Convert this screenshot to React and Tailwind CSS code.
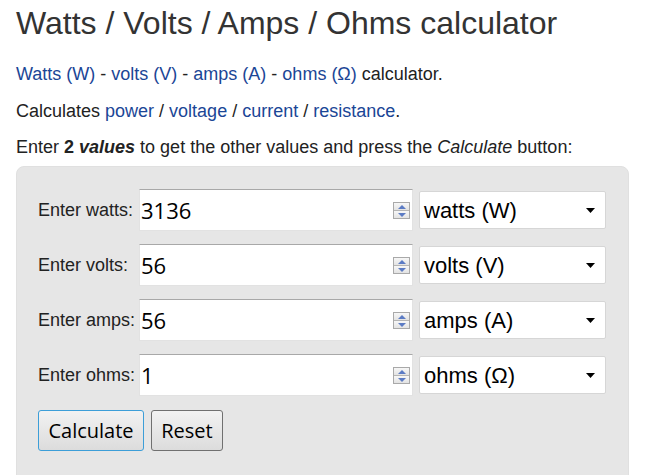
import React, { useState } from 'react';

const rows = [
  { label: 'Enter watts:', value: '3136', unit: 'watts (W)' },
  { label: 'Enter volts:', value: '56', unit: 'volts (V)' },
  { label: 'Enter amps:', value: '56', unit: 'amps (A)' },
  { label: 'Enter ohms:', value: '1', unit: 'ohms (Ω)' },
];

// little up/down spinner like the old windows number input
function Spinner() {
  return (
    <div className="absolute right-[2px] top-[12px] flex h-[17px] w-[17px] flex-col border border-[#a9a9a9] bg-[#eeeeee]">
      <div className="flex flex-1 items-center justify-center border-b border-[#b5b5b5] bg-gradient-to-b from-[#f7f7f7] to-[#e3e3e3]">
        <svg width="8" height="4" viewBox="0 0 8 4"><path d="M0 4 L4 0 L8 4 Z" fill="#5b7bc4" /></svg>
      </div>
      <div className="flex flex-1 items-center justify-center bg-gradient-to-b from-[#f7f7f7] to-[#e3e3e3]">
        <svg width="8" height="4" viewBox="0 0 8 4"><path d="M0 0 L8 0 L4 4 Z" fill="#5b7bc4" /></svg>
      </div>
    </div>
  );
}

function Row({ label, value, unit }) {
  const [val, setVal] = useState(value);
  return (
    <div className="flex items-center">
      <label className="w-[101px] shrink-0 text-[18px] text-[#222]">{label}</label>
      <div className="relative h-[42px] w-[274px] shrink-0 border border-[#e2e2e2] border-t-[#a8a8a8] bg-white">
        <input
          value={val}
          onChange={(e) => setVal(e.target.value)}
          className="h-full w-full bg-transparent pl-[1px] pr-6 text-[22px] text-black outline-none [font-family:'Open_Sans',sans-serif]"
        />
        <Spinner />
      </div>
      <div className="relative ml-[6px] flex h-[38px] w-[187px] shrink-0 items-center rounded-[2px] border border-[#d6d6d6] bg-white pl-[4px]">
        <span className="text-[22px] text-black">{unit}</span>
        <svg className="absolute right-[10px] top-[16px]" width="9" height="5" viewBox="0 0 9 5"><path d="M0 0 L9 0 L4.5 5 Z" fill="#000" /></svg>
      </div>
    </div>
  );
}

export default function App() {
  return (
    <div className="min-h-[475px] bg-white px-[16px] [font-family:'Liberation_Sans',Arial,sans-serif]">
      <h1 className="pt-[4px] text-[32px] leading-[38px] font-normal text-[#333]">
        Watts / Volts / Amps / Ohms calculator
      </h1>
      <p className="mt-[19px] text-[18px] leading-[26px] text-[#222]">
        <a className="text-[#1b4696]">Watts (W)</a> - <a className="text-[#1b4696]">volts (V)</a> -{' '}
        <a className="text-[#1b4696]">amps (A)</a> - <a className="text-[#1b4696]">ohms (Ω)</a> calculator.
      </p>
      <p className="mt-[11px] text-[18px] leading-[26px] text-[#222]">
        Calculates <a className="text-[#1b4696]">power</a> / <a className="text-[#1b4696]">voltage</a> /{' '}
        <a className="text-[#1b4696]">current</a> / <a className="text-[#1b4696]">resistance</a>.
      </p>
      <p className="mt-[10px] text-[18px] leading-[26px] text-[#222]">
        Enter <b>2 <i>values</i></b> to get the other values and press the <i>Calculate</i> button:
      </p>

      <div className="mt-[6px] w-[613px] rounded-t-[8px] border border-[#e0e0e0] bg-[#e6e6e6] pb-[40px] pl-[21px] pt-[22px]">
        <div className="flex flex-col gap-[13px]">
          {rows.map((r) => (
            <Row key={r.label} {...r} />
          ))}
        </div>
        <div className="mt-[14px] flex gap-[7px] [font-family:'Open_Sans',sans-serif]">
          <button className="h-[41px] w-[106px] rounded-[3px] border border-[#3c9ed8] bg-gradient-to-b from-[#f2f2f2] to-[#dcdcdc] text-[20px] text-black">
            Calculate
          </button>
          <button className="h-[41px] w-[72px] rounded-[3px] border border-[#707070] bg-gradient-to-b from-[#f2f2f2] to-[#dcdcdc] text-[20px] text-black">
            Reset
          </button>
        </div>
      </div>
    </div>
  );
}
